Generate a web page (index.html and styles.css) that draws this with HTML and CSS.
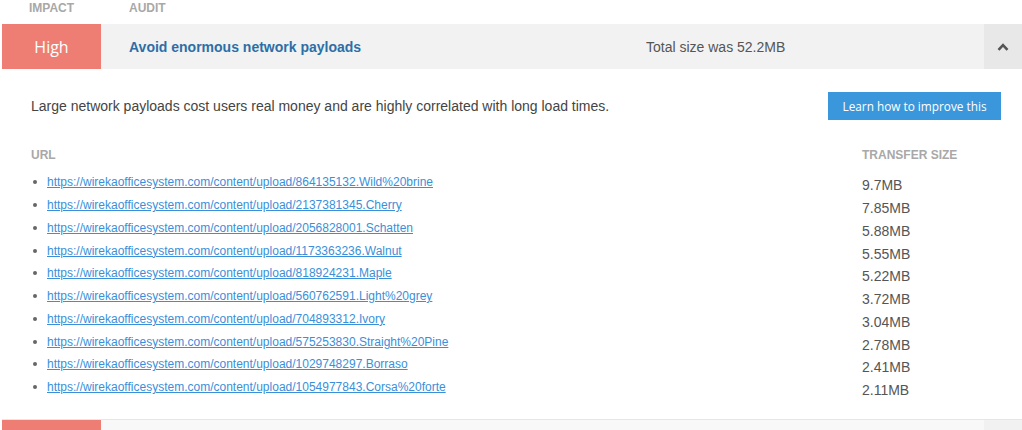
FILE: index.html
```html
<!DOCTYPE html>
<html>
<head>
<meta charset="utf-8">
<link rel="stylesheet" href="styles.css">
</head>
<body>
<div class="report">
  <div class="cols">
    <div class="col-impact">IMPACT</div>
    <div class="col-audit">AUDIT</div>
  </div>

  <div class="audit open">
    <div class="audit-head">
      <div class="impact">High</div>
      <div class="title">Avoid enormous network payloads</div>
      <div class="summary">Total size was 52.2MB</div>
      <div class="toggle">
        <svg width="12" height="8" viewBox="0 0 12 8"><path d="M1.5 6.8 L6 2.2 L10.5 6.8" fill="none" stroke="#555" stroke-width="2.6"/></svg>
      </div>
    </div>
    <div class="details">
      <div class="desc-row">
        <p class="desc">Large network payloads cost users real money and are highly correlated with long load times.</p>
        <a class="learn" href="#">Learn how to improve this</a>
      </div>
      <div class="table-head">
        <div>URL</div>
        <div>TRANSFER SIZE</div>
      </div>
      <ul class="rows">
        <li><a href="#">https://wirekaofficesystem.com/content/upload/864135132.Wild%20brine</a><span>9.7MB</span></li>
        <li><a href="#">https://wirekaofficesystem.com/content/upload/2137381345.Cherry</a><span>7.85MB</span></li>
        <li><a href="#">https://wirekaofficesystem.com/content/upload/2056828001.Schatten</a><span>5.88MB</span></li>
        <li><a href="#">https://wirekaofficesystem.com/content/upload/1173363236.Walnut</a><span>5.55MB</span></li>
        <li><a href="#">https://wirekaofficesystem.com/content/upload/818924231.Maple</a><span>5.22MB</span></li>
        <li><a href="#">https://wirekaofficesystem.com/content/upload/560762591.Light%20grey</a><span>3.72MB</span></li>
        <li><a href="#">https://wirekaofficesystem.com/content/upload/704893312.Ivory</a><span>3.04MB</span></li>
        <li><a href="#">https://wirekaofficesystem.com/content/upload/575253830.Straight%20Pine</a><span>2.78MB</span></li>
        <li><a href="#">https://wirekaofficesystem.com/content/upload/1029748297.Borraso</a><span>2.41MB</span></li>
        <li><a href="#">https://wirekaofficesystem.com/content/upload/1054977843.Corsa%20forte</a><span>2.11MB</span></li>
      </ul>
    </div>
  </div>

  <div class="audit next">
    <div class="audit-head">
      <div class="impact"></div>
      <div class="title"></div>
      <div class="summary"></div>
      <div class="toggle"></div>
    </div>
  </div>
</div>
</body>
</html>
```

FILE: styles.css
```css
* { box-sizing: border-box; }
html, body { margin: 0; padding: 0; background: #fff; overflow: hidden; }
body { font-family: "Liberation Sans", Arial, sans-serif; color: #444; }

.report { padding-left: 2px; }

.cols {
  display: flex;
  height: 24px;
  font-size: 12px;
  font-weight: bold;
  line-height: 16px;
  color: #a8a8a8;
}
.col-impact { width: 99px; text-align: center; }
.col-audit { padding-left: 28px; }

.audit-head {
  display: flex;
  height: 45px;
  align-items: stretch;
  background: #f2f2f2;
}
.impact {
  width: 99px;
  background: #ee7e74;
  color: #fff;
  font-family: "Open Sans", sans-serif;
  font-size: 16px;
  display: flex;
  align-items: center;
  justify-content: center;
}
.title {
  flex: 0 0 545px;
  padding-left: 28px;
  display: flex;
  align-items: center;
  font-size: 14px;
  font-weight: bold;
  color: #2d6ea6;
}
.summary {
  flex: 1;
  display: flex;
  align-items: center;
  font-size: 14px;
  color: #555;
}
.toggle {
  width: 38px;
  background: #e8e8e8;
  display: flex;
  align-items: center;
  justify-content: center;
}

.details {
  padding: 23px 21px 20px 29px;
  border-bottom: 1px solid #e6e6e6;
}
.desc-row {
  display: flex;
  justify-content: space-between;
  align-items: center;
  height: 28px;
}
.desc { margin: 0; font-size: 14px; color: #444; }
.learn {
  display: flex;
  align-items: center;
  justify-content: center;
  height: 28px;
  width: 173px;
  background: #3a97dc;
  color: #fff;
  text-decoration: none;
  font-family: "Open Sans", sans-serif;
  font-size: 11.8px;
}

.table-head {
  display: grid;
  grid-template-columns: 1fr 139px;
  margin-top: 27px;
  font-size: 12px;
  font-weight: bold;
  line-height: 16px;
  color: #a8a8a8;
}

.rows {
  list-style: none;
  margin: 8px 0 0;
  padding: 0;
}
.rows li {
  display: grid;
  grid-template-columns: 1fr 139px;
  height: 22.75px;
  align-items: center;
}
.rows a {
  display: flex;
  align-items: center;
  gap: 10px;
  font-size: 12px;
  color: #3a8fd9;
  text-decoration: underline;
  justify-self: start;
}
.rows a::before {
  content: "";
  width: 4px;
  height: 4px;
  margin-left: 2px;
  border-radius: 50%;
  background: #666;
}
.rows span {
  font-size: 14px;
  color: #555;
  padding-top: 6px;
}

.next .audit-head { background: #f8f8f8; }
.next .toggle { background: #f1f1f1; }
```
